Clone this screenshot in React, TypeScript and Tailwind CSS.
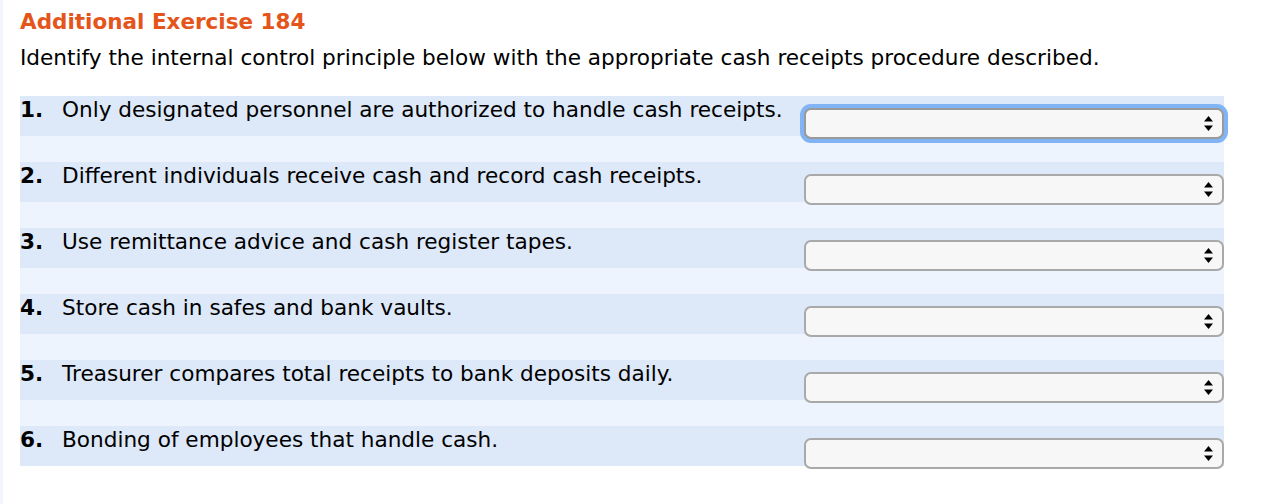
import React from 'react';

const items = [
  'Only designated personnel are authorized to handle cash receipts.',
  'Different individuals receive cash and record cash receipts.',
  'Use remittance advice and cash register tapes.',
  'Store cash in safes and bank vaults.',
  'Treasurer compares total receipts to bank deposits daily.',
  'Bonding of employees that handle cash.',
];

function Picker({ focused }: { focused?: boolean }) {
  return (
    <div className="relative mt-[12px] w-[420px] shrink-0">
      <select
        defaultValue=""
        className={`block h-[31px] w-full appearance-none rounded-[7px] border-2 bg-[#f7f7f7] px-2 outline-none ${
          focused ? 'border-[#9a9a9a] shadow-[0_0_0_4px_#80b4f5]' : 'border-[#a9a9a9]'
        }`}
      >
        <option value=""></option>
      </select>
      {/* up/down caret pair */}
      <svg
        className="pointer-events-none absolute right-[11px] top-[8px]"
        width="9"
        height="15"
        viewBox="0 0 9 15"
      >
        <path d="M4.5 0 L9 5.5 L0 5.5 Z" fill="#000" />
        <path d="M0 9.5 L9 9.5 L4.5 15 Z" fill="#000" />
      </svg>
    </div>
  );
}

export default function App() {
  return (
    <div className="h-[504px] w-[1286px] overflow-hidden border-l-[3px] border-[#f2f6fc] bg-white pl-[17px] font-['DejaVu_Sans',Verdana,sans-serif] text-black">
      <h2 className="pt-[9px] text-[21.5px] font-bold leading-[26px] text-[#e4541b]">Additional Exercise 184</h2>
      <p className="mt-[10px] text-[21.6px] leading-[26px]">
        Identify the internal control principle below with the appropriate cash receipts procedure described.
      </p>

      <div className="mt-[25px] w-[1204px]">
        {items.map((text, i) => (
          <div key={i} className={i < items.length - 1 ? 'bg-[#edf4fd] pb-[26px]' : ''}>
            <div className="flex h-[40px] items-start bg-[#dde8f8] text-[21.6px] leading-[26px]">
              <span className="w-[42px] shrink-0 pt-[1px] font-bold">{i + 1}.</span>
              <span className="flex-1 pt-[1px]">{text}</span>
              <Picker focused={i === 0} />
            </div>
          </div>
        ))}
      </div>
    </div>
  );
}
